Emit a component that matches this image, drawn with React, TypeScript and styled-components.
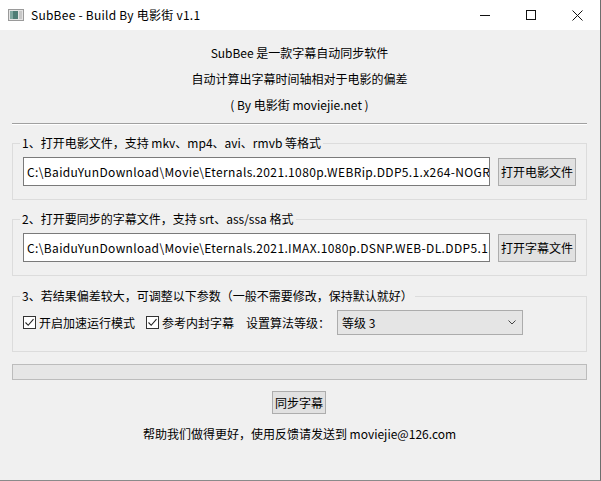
import React from "react";
import styled, { createGlobalStyle } from "styled-components";

const Global = createGlobalStyle`
  html, body { margin: 0; padding: 0; background: #ffffff; }
  body { font-family: "Noto Sans CJK SC", "Noto Sans", sans-serif; font-size: 12px; color: #000; }
  * { box-sizing: border-box; }
`;

const Window = styled.div`
  width: 601px;
  height: 481px;
  display: flex;
  flex-direction: column;
  border-right: 1px solid #6e6e6e;
  border-bottom: 1px solid #8a8a8a;
  background: #f0f0f0;
`;

const TitleBar = styled.div`
  height: 30px;
  flex: none;
  background: #ffffff;
  display: flex;
  align-items: center;
  padding-left: 8px;
`;

const TitleText = styled.span`
  margin-left: 7px;
  font-size: 12px;
  line-height: 16px;
  letter-spacing: 0.25px;
  color: #000;
`;

const Controls = styled.div`
  margin-left: auto;
  display: flex;
  height: 30px;
`;

const CtrlButton = styled.div`
  width: 46px;
  height: 30px;
  display: flex;
  align-items: center;
  justify-content: center;
`;

const Client = styled.div`
  flex: 1;
  display: flex;
  flex-direction: column;
  padding: 10px 13px 0 12px;
  background: #f0f0f0;
`;

const Intro = styled.div`
  text-align: center;
  line-height: 26px;
  font-size: 12px;
`;

const Divider = styled.div`
  margin-top: 5px;
  height: 2px;
  border-top: 1px solid #a0a0a0;
  border-bottom: 1px solid #ffffff;
`;

const Group = styled.fieldset<{ $mt: number; $pb: number }>`
  margin: ${(p) => p.$mt}px 0 0 0;
  padding: 6px 10px ${(p) => p.$pb}px 10px;
  border: 1px solid #dcdcdc;
  min-width: 0;
`;

const Legend = styled.legend`
  padding: 0 2px;
  margin-left: -3px;
  font-size: 12px;
  line-height: 16px;
`;

const FileRow = styled.div`
  display: flex;
  align-items: center;
  gap: 8px;
`;

const PathBox = styled.div`
  flex: 1;
  min-width: 0;
  height: 29px;
  background: #ffffff;
  border: 1px solid #7a7a7a;
  padding-left: 3px;
  display: flex;
  align-items: center;
  white-space: nowrap;
  overflow: hidden;
  font-size: 12px;
  letter-spacing: 0.36px;
`;

const Button = styled.div<{ $w: number; $h: number }>`
  width: ${(p) => p.$w}px;
  height: ${(p) => p.$h}px;
  flex: none;
  background: #e1e1e1;
  border: 1px solid #adadad;
  display: flex;
  align-items: center;
  justify-content: center;
  font-size: 12px;
`;

const OptionsRow = styled.div`
  display: flex;
  align-items: center;
  height: 25px;
`;

const CheckItem = styled.label<{ $mr: number }>`
  display: flex;
  align-items: center;
  gap: 3px;
  margin-right: ${(p) => p.$mr}px;
  font-size: 12px;
`;

const CheckBox = styled.span`
  width: 13px;
  height: 13px;
  border: 1px solid #333333;
  background: #ffffff;
  display: flex;
  align-items: center;
  justify-content: center;
`;

const FieldLabel = styled.span`
  font-size: 12px;
  margin-right: 7px;
`;

const Select = styled.div`
  width: 186px;
  height: 25px;
  background: #e5e5e5;
  border: 1px solid #acacac;
  display: flex;
  align-items: center;
  padding: 0 6px 0 4px;
  font-size: 12px;
  justify-content: space-between;
`;

const Progress = styled.div`
  margin-top: 12px;
  height: 16px;
  background: #e6e6e6;
  border: 1px solid #bcbcbc;
`;

const SyncRow = styled.div`
  margin-top: 11px;
  display: flex;
  justify-content: center;
  padding-right: 1px;
`;

const Footer = styled.div`
  margin-top: 10px;
  text-align: center;
  line-height: 20px;
  font-size: 12px;
`;

const Check = () => (
  <CheckBox>
    <svg width="11" height="11" viewBox="0 0 11 11">
      <path d="M1.5 5.5 L4.2 8.3 L9.5 2.2" fill="none" stroke="#222" strokeWidth="1.1" />
    </svg>
  </CheckBox>
);

export default function App() {
  return (
    <>
      <Global />
      <Window>
        <TitleBar>
          <svg width="16" height="12" viewBox="0 0 16 12">
            <rect x="0.5" y="0.5" width="15" height="11" fill="#e4e4e4" stroke="#9a9a9a" />
            <rect x="2" y="2" width="8" height="8" fill="#4f7d76" />
            <rect x="2" y="2" width="3" height="8" fill="#7fa7a0" />
            <rect x="11" y="2" width="3" height="8" fill="#c8c8c8" />
          </svg>
          <TitleText>SubBee - Build By 电影街 v1.1</TitleText>
          <Controls>
            <CtrlButton>
              <svg width="10" height="10" viewBox="0 0 10 10">
                <path d="M0 5.5 H10" stroke="#111" strokeWidth="1" />
              </svg>
            </CtrlButton>
            <CtrlButton>
              <svg width="10" height="10" viewBox="0 0 10 10">
                <rect x="0.5" y="0.5" width="9" height="9" fill="none" stroke="#111" strokeWidth="1" />
              </svg>
            </CtrlButton>
            <CtrlButton>
              <svg width="11" height="11" viewBox="0 0 11 11">
                <path d="M0.5 0.5 L10.5 10.5 M10.5 0.5 L0.5 10.5" stroke="#111" strokeWidth="1" />
              </svg>
            </CtrlButton>
          </Controls>
        </TitleBar>
        <Client>
          <Intro>
            <div>SubBee 是一款字幕自动同步软件</div>
            <div>自动计算出字幕时间轴相对于电影的偏差</div>
            <div>( By 电影街 moviejie.net )</div>
          </Intro>
          <Divider />
          <Group $mt={10} $pb={13}>
            <Legend>1、打开电影文件，支持 mkv、mp4、avi、rmvb 等格式</Legend>
            <FileRow>
              <PathBox>C:\BaiduYunDownload\Movie\Eternals.2021.1080p.WEBRip.DDP5.1.x264-NOGRP.mkv</PathBox>
              <Button $w={78} $h={28}>打开电影文件</Button>
            </FileRow>
          </Group>
          <Group $mt={11} $pb={13}>
            <Legend>2、打开要同步的字幕文件，支持 srt、ass/ssa 格式</Legend>
            <FileRow>
              <PathBox>C:\BaiduYunDownload\Movie\Eternals.2021.IMAX.1080p.DSNP.WEB-DL.DDP5.1.Atmos.H.264.srt</PathBox>
              <Button $w={78} $h={28}>打开字幕文件</Button>
            </FileRow>
          </Group>
          <Group $mt={12} $pb={16}>
            <Legend>3、若结果偏差较大，可调整以下参数（一般不需要修改，保持默认就好）</Legend>
            <OptionsRow>
              <CheckItem $mr={11}>
                <Check />
                开启加速运行模式
              </CheckItem>
              <CheckItem $mr={12}>
                <Check />
                参考内封字幕
              </CheckItem>
              <FieldLabel>设置算法等级：</FieldLabel>
              <Select>
                <span>等级 3</span>
                <svg width="8" height="5" viewBox="0 0 8 5">
                  <path d="M0.5 0.5 L4 4 L7.5 0.5" fill="none" stroke="#444" strokeWidth="1" />
                </svg>
              </Select>
            </OptionsRow>
          </Group>
          <Progress />
          <SyncRow>
            <Button $w={54} $h={23}>同步字幕</Button>
          </SyncRow>
          <Footer>帮助我们做得更好，使用反馈请发送到 moviejie@126.com</Footer>
        </Client>
      </Window>
    </>
  );
}
